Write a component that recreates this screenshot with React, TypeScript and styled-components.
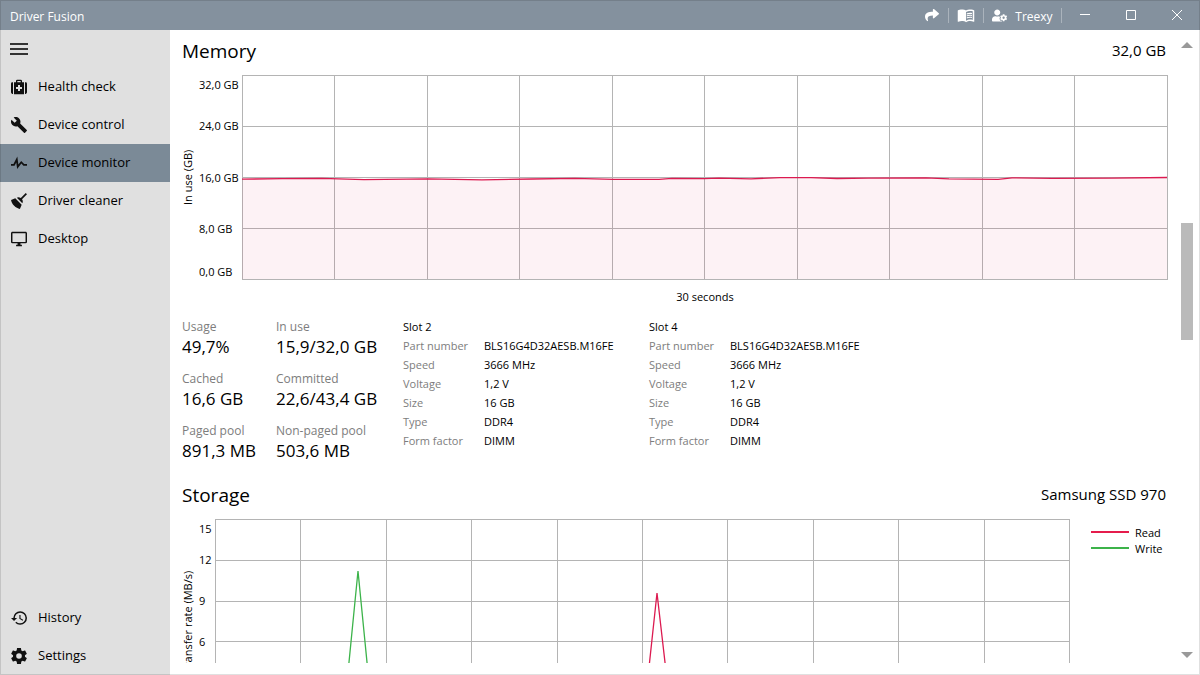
import React from "react";
import styled, { createGlobalStyle } from "styled-components";
import { FaShare, FaUserCog } from "react-icons/fa";
import { MdMenuBook } from "react-icons/md";

const GlobalStyle = createGlobalStyle`
  *, *::before, *::after { box-sizing: border-box; }
  body {
    margin: 0;
    background: #fff;
    color: #000;
    font-family: "Open Sans", "Segoe UI", sans-serif;
    font-size: 11px;
  }
  h2, dl, dd, dt, p, ul, h3 { margin: 0; padding: 0; font-weight: 400; }
  ul { list-style: none; }
  button { font: inherit; color: inherit; background: none; border: 0; padding: 0; }
`;

const Window = styled.div`
  position: relative;
  display: flex;
  flex-direction: column;
  height: 100vh;
  overflow: hidden;

  &::after {
    content: "";
    position: absolute;
    inset: 0;
    border: 1px solid rgba(0, 0, 0, 0.12);
    pointer-events: none;
  }
`;

const TitleBar = styled.header`
  display: flex;
  align-items: center;
  height: 30px;
  flex: none;
  background: #84919e;
  color: #fff;
  font-size: 12px;
`;

const AppName = styled.span`
  flex: 1;
  padding: 2px 10px 0;
`;

const ToolButton = styled.button<{ $width: number }>`
  display: flex;
  align-items: center;
  justify-content: center;
  gap: 8px;
  width: ${(p) => p.$width}px;
  height: 30px;
`;

const AccountName = styled.span`
  padding-top: 2px;
`;

const Separator = styled.span`
  width: 1px;
  height: 15px;
  background: #aab3bc;
`;

const Body = styled.div`
  display: flex;
  flex: 1;
  min-height: 0;
`;

const Sidebar = styled.nav`
  display: flex;
  flex-direction: column;
  width: 170px;
  flex: none;
  background: #e0e0e0;
`;

const MenuToggle = styled.button`
  display: flex;
  align-items: center;
  height: 38px;
  padding: 0 10px;
  flex: none;
`;

const NavList = styled.ul`
  &:last-child {
    margin-top: auto;
  }
`;

const NavLink = styled.a<{ $active?: boolean }>`
  display: flex;
  align-items: center;
  gap: 11px;
  height: 38px;
  padding: 0 11px;
  font-size: 13px;
  color: #000;
  text-decoration: none;
  background: ${(p) => (p.$active ? "#7b8a97" : "transparent")};
`;

const NavLabel = styled.span`
  padding-bottom: 2px;
`;

const Content = styled.main`
  flex: 1;
  min-width: 0;
  margin-bottom: 12px;
  padding: 6px 13px 0 12px;
  overflow-y: auto;
  scrollbar-width: none;
`;

const Section = styled.section`
  margin-bottom: 18px;
`;

const SectionHeader = styled.header`
  display: flex;
  align-items: flex-start;
  justify-content: space-between;
  height: 30px;
  margin-bottom: 9px;
  padding-right: 2px;
`;

const SectionTitle = styled.h2`
  font-size: 19px;
  line-height: 30px;
`;

const SectionValue = styled.span`
  font-size: 15px;
  line-height: 28px;
`;

const ChartRow = styled.div`
  display: flex;
  height: 205px;
`;

const AxisTitle = styled.span`
  width: 17px;
  flex: none;
  line-height: 12px;
  padding-left: 5px;
  text-align: center;
  white-space: nowrap;
  writing-mode: vertical-rl;
  transform: rotate(180deg);
`;

const Ticks = styled.div<{ $width: number; $steps: number }>`
  display: grid;
  grid-template-rows: 1fr repeat(${(p) => p.$steps - 1}, 2fr) 1fr;
  align-items: center;
  width: ${(p) => p.$width}px;
  flex: none;
  line-height: 16px;
  white-space: nowrap;

  & > :first-child {
    align-self: start;
    padding-top: 2px;
  }
  & > :last-child {
    align-self: end;
  }
`;

const Plot = styled.svg`
  display: block;
  flex: 1;
  min-width: 0;
  height: 205px;
`;

const Caption = styled.p`
  height: 37px;
  padding-left: 60px;
  line-height: 34px;
  text-align: center;
`;

const Legend = styled.ul`
  width: 98px;
  flex: none;
  padding: 5px 0 0 21px;
`;

const LegendItem = styled.li<{ $color: string }>`
  display: flex;
  align-items: center;
  gap: 6px;
  height: 16px;

  &::before {
    content: "";
    width: 38px;
    height: 2px;
    background: ${(p) => p.$color};
  }
`;

const Details = styled.div`
  display: flex;
  align-items: flex-start;
`;

const Stats = styled.dl`
  display: grid;
  grid-template-columns: 94px 127px;
  row-gap: 12px;
  padding-top: 1px;
`;

const StatLabel = styled.dt`
  color: #7d7d7d;
  font-size: 12px;
  line-height: 18px;
`;

const StatValue = styled.dd`
  font-size: 17px;
  line-height: 22px;
`;

const Slot = styled.section`
  width: 246px;
  line-height: 19px;
`;

const SlotTitle = styled.h3`
  font-size: 11px;
`;

const SlotFacts = styled.dl`
  display: grid;
  grid-template-columns: 81px 1fr;
`;

const FactLabel = styled.dt`
  color: #7d7d7d;
`;

const ScrollBar = styled.div`
  display: flex;
  flex-direction: column;
  align-items: center;
  width: 12px;
  margin-right: 7px;
  padding-bottom: 5px;
  flex: none;
`;

const ScrollButton = styled.button`
  display: flex;
  align-items: center;
  justify-content: center;
  width: 12px;
  height: 30px;
`;

const ScrollTrack = styled.div`
  display: grid;
  grid-template-rows: 163fr 117fr 300fr;
  flex: 1;
  width: 100%;
`;

const ScrollThumb = styled.div`
  grid-row: 2;
  background: #bababa;
`;

type IconProps = { box: string; d: string };

const Icon = ({ box, d }: IconProps) => (
  <svg width="16" height="16" viewBox={box} aria-hidden="true">
    <path d={d} fill="#111" fillRule="evenodd" />
  </svg>
);

const icons: Record<string, IconProps> = {
  health: {
    box: "0 0 48 48",
    d: "M6 10H4Q0 10 0 14V40Q0 44 4 45H6ZM42 10H44Q48 10 48 14V40Q48 44 44 45H42ZM9 10H15V6Q15 2 19 2H29Q33 2 33 6V10H39V46H9ZM19 10H29V6H19ZM21 18V24H15V30H21V36H27V30H33V24H27V18Z",
  },
  wrench: {
    box: "1 1 22 22",
    d: "M22.7,19L13.6,9.9C14.5,7.6 14,4.9 12.1,3C10.1,1 7.1,0.6 4.7,1.7L9,6L6,9L1.6,4.7C0.4,7.1 0.9,10.1 2.9,12.1C4.8,14 7.5,14.5 9.8,13.6L18.9,22.7C19.3,23.1 19.9,23.1 20.3,22.7L22.6,20.4C23.1,20 23.1,19.3 22.7,19Z",
  },
  pulse: {
    box: "3 3 18 18",
    d: "M3,13H5.79L10.1,4.79L11.28,13.75L14.5,9.66L17.83,13H21V15H17L14.67,12.67L9.92,18.73L8.94,11.31L7,15H3V13Z",
  },
  broom: {
    box: "2.3 2.7 18.5 18.5",
    d: "M19.36,2.72L20.78,4.14L15.06,9.85C16.13,11.39 16.28,13.24 15.38,14.44L9.06,8.12C10.26,7.22 12.11,7.37 13.65,8.44L19.36,2.72M5.93,17.57C3.92,15.56 2.69,13.16 2.35,10.92L7.23,8.83L14.67,16.27L12.58,21.15C10.34,20.81 7.94,19.58 5.93,17.57Z",
  },
  monitor: {
    box: "1 1 22 22",
    d: "M21,16H3V4H21M21,2H3C1.89,2 1,2.89 1,4V16A2,2 0 0,0 3,18H10V20H8V22H16V20H14V18H21A2,2 0 0,0 23,16V4C23,2.89 22.1,2 21,2Z",
  },
  history: {
    box: "1 1.5 21 21",
    d: "M13.5,8H12V13L16.28,15.54L17,14.33L13.5,12.25V8M13,3A9,9 0 0,0 4,12H1L4.96,16.03L9,12H6A7,7 0 0,1 13,5A7,7 0 0,1 20,12A7,7 0 0,1 13,19C11.07,19 9.32,18.21 8.06,16.94L6.64,18.36C8.27,20 10.5,21 13,21A9,9 0 0,0 22,12A9,9 0 0,0 13,3",
  },
  cog: {
    box: "2 2 20 20",
    d: "M12,15.5A3.5,3.5 0 0,1 8.5,12A3.5,3.5 0 0,1 12,8.5A3.5,3.5 0 0,1 15.5,12A3.5,3.5 0 0,1 12,15.5M19.43,12.97C19.47,12.65 19.5,12.33 19.5,12C19.5,11.67 19.47,11.34 19.43,11L21.54,9.37C21.73,9.22 21.78,8.95 21.66,8.73L19.66,5.27C19.54,5.05 19.27,4.96 19.05,5.05L16.56,6.05C16.04,5.66 15.5,5.32 14.87,5.07L14.5,2.42C14.46,2.18 14.25,2 14,2H10C9.75,2 9.54,2.18 9.5,2.42L9.13,5.07C8.5,5.32 7.96,5.66 7.44,6.05L4.95,5.05C4.73,4.96 4.46,5.05 4.34,5.27L2.34,8.73C2.21,8.95 2.27,9.22 2.46,9.37L4.57,11C4.53,11.34 4.5,11.67 4.5,12C4.5,12.33 4.53,12.65 4.57,12.97L2.46,14.63C2.27,14.78 2.21,15.05 2.34,15.27L4.34,18.73C4.46,18.95 4.73,19.03 4.95,18.95L7.44,17.94C7.96,18.34 8.5,18.68 9.13,18.93L9.5,21.58C9.54,21.82 9.75,22 10,22H14C14.25,22 14.46,21.82 14.5,21.58L14.87,18.93C15.5,18.67 16.04,18.34 16.56,17.94L19.05,18.95C19.27,19.03 19.54,18.95 19.66,18.73L21.66,15.27C21.78,15.05 21.73,14.78 21.54,14.63L19.43,12.97Z",
  },
};

type NavEntry = { label: string; icon: string; active?: boolean };

const mainNav: NavEntry[] = [
  { label: "Health check", icon: "health" },
  { label: "Device control", icon: "wrench" },
  { label: "Device monitor", icon: "pulse", active: true },
  { label: "Driver cleaner", icon: "broom" },
  { label: "Desktop", icon: "monitor" },
];

const footNav: NavEntry[] = [
  { label: "History", icon: "history" },
  { label: "Settings", icon: "cog" },
];

const NavItems = ({ entries }: { entries: NavEntry[] }) => (
  <NavList>
    {entries.map((e) => (
      <li key={e.label}>
        <NavLink href="#" $active={e.active} aria-current={e.active ? "page" : undefined}>
          <Icon {...icons[e.icon]} />
          <NavLabel>{e.label}</NavLabel>
        </NavLink>
      </li>
    ))}
  </NavList>
);

const stats = [
  ["Usage", "49,7%"],
  ["In use", "15,9/32,0 GB"],
  ["Cached", "16,6 GB"],
  ["Committed", "22,6/43,4 GB"],
  ["Paged pool", "891,3 MB"],
  ["Non-paged pool", "503,6 MB"],
];

const moduleFacts = [
  ["Part number", "BLS16G4D32AESB.M16FE"],
  ["Speed", "3666 MHz"],
  ["Voltage", "1,2 V"],
  ["Size", "16 GB"],
  ["Type", "DDR4"],
  ["Form factor", "DIMM"],
];

const MEMORY_LINE =
  "0,104.2 40,103.6 80,103.4 122,104.6 186,103.8 240,104.8 290,104 333,103.4 372,104.4 417,104.3 430,103.3 462,103.6 477,103.2 509,103.8 538,102.6 569,102.6 595,103.5 626,103.1 684,102.8 707,103.8 756,104.3 770,102.8 810,103.3 870,103.1 925,102.5";

type GridProps = { width: number; rows: number; children: React.ReactNode };

/* A ten-column plot; series are given in the units of its view box. */
const GridPlot = ({ width, rows, children }: GridProps) => (
  <Plot viewBox={`0 0 ${width + 1} 205`} preserveAspectRatio="none" role="img">
    <g stroke="#b4b4b4" shapeRendering="crispEdges">
      {Array.from({ length: 11 }, (_, i) => {
        const x = Math.ceil((i * width) / 10 - 0.5) + 0.5;
        return <line key={`x${i}`} x1={x} x2={x} y1="0" y2="205" vectorEffect="non-scaling-stroke" />;
      })}
      {Array.from({ length: rows + 1 }, (_, i) => {
        const y = Math.round((i * 204) / rows) + 0.5;
        return <line key={`y${i}`} x1="0" x2={width + 1} y1={y} y2={y} vectorEffect="non-scaling-stroke" />;
      })}
    </g>
    {children}
  </Plot>
);

export default function App() {
  return (
    <Window>
      <GlobalStyle />
      <TitleBar>
        <AppName>Driver Fusion</AppName>
        <ToolButton $width={32} aria-label="Share">
          <FaShare size={14} />
        </ToolButton>
        <Separator />
        <ToolButton $width={34} aria-label="Manual">
          <MdMenuBook size={18} />
        </ToolButton>
        <Separator />
        <ToolButton $width={77}>
          <FaUserCog size={15} />
          <AccountName>Treexy</AccountName>
        </ToolButton>
        <Separator />
        <ToolButton $width={46} aria-label="Minimize">
          <svg width="10" height="12">
            <path d="M0 5.5H10" stroke="#fff" />
          </svg>
        </ToolButton>
        <ToolButton $width={46} aria-label="Maximize">
          <svg width="10" height="10">
            <path d="M.5 .5H9.5V9.5H.5Z" stroke="#fff" fill="none" />
          </svg>
        </ToolButton>
        <ToolButton $width={46} aria-label="Close">
          <svg width="10" height="10">
            <path d="M0 0L10 10M10 0L0 10" stroke="#fff" />
          </svg>
        </ToolButton>
      </TitleBar>

      <Body>
        <Sidebar>
          <MenuToggle aria-label="Toggle menu">
            <svg width="18" height="12" viewBox="0 0 18 12">
              <path d="M0 1H18M0 6H18M0 11H18" stroke="#333" strokeWidth="2" />
            </svg>
          </MenuToggle>
          <NavItems entries={mainNav} />
          <NavItems entries={footNav} />
        </Sidebar>

        <Content>
          <Section>
            <SectionHeader>
              <SectionTitle>Memory</SectionTitle>
              <SectionValue>32,0 GB</SectionValue>
            </SectionHeader>
            <ChartRow>
              <AxisTitle>In use (GB)</AxisTitle>
              <Ticks $width={43} $steps={4}>
                {["32,0 GB", "24,0 GB", "16,0 GB", "8,0 GB", "0,0 GB"].map((t) => (
                  <span key={t}>{t}</span>
                ))}
              </Ticks>
              <GridPlot width={925} rows={4}>
                <polygon points={`0,204 ${MEMORY_LINE} 925,204`} fill="rgba(224, 20, 76, 0.055)" />
                <polyline
                  points={MEMORY_LINE}
                  fill="none"
                  stroke="#dc1a50"
                  strokeWidth="1.3"
                  vectorEffect="non-scaling-stroke"
                />
              </GridPlot>
            </ChartRow>
            <Caption>30 seconds</Caption>
            <Details>
              <Stats>
                {stats.map(([label, value]) => (
                  <div key={label}>
                    <StatLabel>{label}</StatLabel>
                    <StatValue>{value}</StatValue>
                  </div>
                ))}
              </Stats>
              {["Slot 2", "Slot 4"].map((slot) => (
                <Slot key={slot}>
                  <SlotTitle>{slot}</SlotTitle>
                  <SlotFacts>
                    {moduleFacts.map(([label, value]) => (
                      <React.Fragment key={label}>
                        <FactLabel>{label}</FactLabel>
                        <dd>{value}</dd>
                      </React.Fragment>
                    ))}
                  </SlotFacts>
                </Slot>
              ))}
            </Details>
          </Section>

          <Section>
            <SectionHeader>
              <SectionTitle>Storage</SectionTitle>
              <SectionValue>Samsung SSD 970</SectionValue>
            </SectionHeader>
            <ChartRow>
              <AxisTitle>Transfer rate (MB/s)</AxisTitle>
              <Ticks $width={16} $steps={5}>
                {["15", "12", "9", "6", "3", "0"].map((t) => (
                  <span key={t}>{t}</span>
                ))}
              </Ticks>
              <GridPlot width={854} rows={5}>
                <polyline
                  points="0,204 128,204 143,52 158,204 854,204"
                  fill="none"
                  stroke="#3cb34a"
                  strokeWidth="1.3"
                  vectorEffect="non-scaling-stroke"
                />
                <polyline
                  points="0,204 428,204 442,74 457,204 854,204"
                  fill="none"
                  stroke="#dc1a50"
                  strokeWidth="1.3"
                  vectorEffect="non-scaling-stroke"
                />
              </GridPlot>
              <Legend>
                <LegendItem $color="#e51c4c">Read</LegendItem>
                <LegendItem $color="#3cb34a">Write</LegendItem>
              </Legend>
            </ChartRow>
            <Caption>30 seconds</Caption>
          </Section>
        </Content>

        <ScrollBar>
          <ScrollButton aria-label="Scroll up">
            <svg width="12" height="6">
              <path d="M0 6L6 0L12 6Z" fill="#999" />
            </svg>
          </ScrollButton>
          <ScrollTrack>
            <ScrollThumb />
          </ScrollTrack>
          <ScrollButton aria-label="Scroll down">
            <svg width="12" height="6">
              <path d="M0 0L6 6L12 0Z" fill="#999" />
            </svg>
          </ScrollButton>
        </ScrollBar>
      </Body>
    </Window>
  );
}
